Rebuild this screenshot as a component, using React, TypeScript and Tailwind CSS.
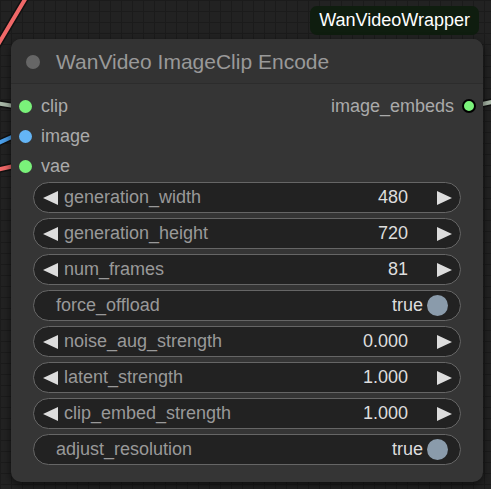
import React from "react";

type Widget =
  | { kind: "number"; label: string; value: string }
  | { kind: "toggle"; label: string; value: string };

const widgets: Widget[] = [
  { kind: "number", label: "generation_width", value: "480" },
  { kind: "number", label: "generation_height", value: "720" },
  { kind: "number", label: "num_frames", value: "81" },
  { kind: "toggle", label: "force_offload", value: "true" },
  { kind: "number", label: "noise_aug_strength", value: "0.000" },
  { kind: "number", label: "latent_strength", value: "1.000" },
  { kind: "number", label: "clip_embed_strength", value: "1.000" },
  { kind: "toggle", label: "adjust_resolution", value: "true" },
];

const inputs = [
  { name: "clip", color: "bg-[#7af27a]" },
  { name: "image", color: "bg-[#64b5f6]" },
  { name: "vae", color: "bg-[#7af27a]" },
];

const Arrow = ({ dir }: { dir: "left" | "right" }) => (
  <svg width="16" height="14" viewBox="0 0 16 14" className="shrink-0">
    {dir === "left" ? (
      <polygon points="15,0 15,14 0,7" fill="#dddddd" />
    ) : (
      <polygon points="1,0 1,14 16,7" fill="#dddddd" />
    )}
  </svg>
);

const WidgetRow = ({ w }: { w: Widget }) => {
  if (w.kind === "toggle") {
    return (
      <div className="flex h-[31px] items-center rounded-full border border-[#666] bg-[#222] pl-[22px] pr-[12px]">
        <span className="text-[#999]">{w.label}</span>
        <span className="ml-auto text-[#ddd]">{w.value}</span>
        <span className="ml-[4px] h-[21px] w-[21px] rounded-full bg-[#8a9bab]" />
      </div>
    );
  }
  return (
    <div className="flex h-[31px] items-center rounded-full border border-[#666] bg-[#222] pl-[9px] pr-[8px]">
      <Arrow dir="left" />
      <span className="ml-[5px] text-[#999]">{w.label}</span>
      <span className="ml-auto text-[#ddd]">{w.value}</span>
      <span className="ml-[28px]">
        <Arrow dir="right" />
      </span>
    </div>
  );
};

export default function App() {
  return (
    <div
      className="relative h-[489px] w-[491px] overflow-hidden bg-[#222] bg-[linear-gradient(#1b1b1b_1px,transparent_1px),linear-gradient(90deg,#1b1b1b_1px,transparent_1px)] bg-[size:11px_11px]"
      style={{ fontFamily: '"Liberation Sans", Arial, sans-serif' }}
    >
      {/* wires */}
      <svg className="absolute inset-0" width="491" height="489">
        <g strokeLinecap="round" fill="none">
          <path d="M-4 48 L27 -4" stroke="#111" strokeWidth="7" />
          <path d="M-4 48 L27 -4" stroke="#f06868" strokeWidth="4" />
          <path d="M-4 103 L14 106" stroke="#111" strokeWidth="7" />
          <path d="M-4 103 L14 106" stroke="#a9b8a8" strokeWidth="4" />
          <path d="M-4 144 L14 136" stroke="#111" strokeWidth="7" />
          <path d="M-4 144 L14 136" stroke="#4a9ee8" strokeWidth="4" />
          <path d="M-4 170 L14 166" stroke="#111" strokeWidth="7" />
          <path d="M-4 170 L14 166" stroke="#f06868" strokeWidth="4" />
          <path d="M478 105 L496 101" stroke="#111" strokeWidth="7" />
          <path d="M478 105 L496 101" stroke="#a9b8a8" strokeWidth="4" />
        </g>
      </svg>

      {/* badge */}
      <div className="absolute right-[12px] top-[6px] flex h-[29px] items-center rounded-[7px] bg-[#0f1d0f] px-[9px] text-[18px] text-white">
        WanVideoWrapper
      </div>

      {/* node */}
      <div className="absolute left-[11px] top-[39px] w-[472px] rounded-[10px] bg-[#353535] pb-[17px] text-[18px] shadow-[0_3px_8px_rgba(0,0,0,0.6)]">
        <div className="flex h-[45px] items-center rounded-t-[10px] border-b border-[#2c2c2c] bg-[#333] pl-[15px] pt-[1px]">
          <span className="h-[14px] w-[14px] rounded-full bg-[#666]" />
          <span className="ml-[16px] text-[21px] text-[#999]">WanVideo ImageClip Encode</span>
        </div>

        <div className="relative pt-[7px]">
          {inputs.map((s) => (
            <div key={s.name} className="flex h-[30px] items-center pl-[8px]">
              <span className={`h-[13px] w-[13px] rounded-full ${s.color}`} />
              <span className="ml-[9px] text-[#aaa]">{s.name}</span>
            </div>
          ))}
          <div className="absolute right-[7px] top-[7px] flex h-[30px] items-center">
            <span className="text-[#aaa]">image_embeds</span>
            <span className="ml-[8px] h-[14px] w-[14px] rounded-full border-2 border-black bg-[#7af27a]" />
          </div>
        </div>

        <div className="mt-[1px] flex flex-col gap-[5px] px-[22px]">
          {widgets.map((w) => (
            <WidgetRow key={w.label} w={w} />
          ))}
        </div>
      </div>
    </div>
  );
}
